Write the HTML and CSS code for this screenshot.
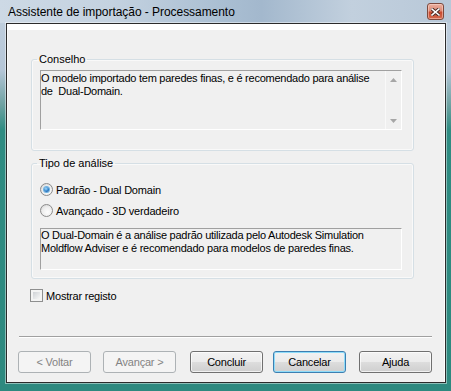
FILE: index.html
```html
<!DOCTYPE html>
<html lang="pt">
<head>
<meta charset="UTF-8" />
<title>Assistente de importação - Processamento</title>
<link rel="stylesheet" href="styles.css">
</head>
<body>
  <div class="window">
    <div class="titlebar">
      <span class="title">Assistente de importação - Processamento</span>
      <span class="close" aria-label="Fechar">
        <svg width="9" height="8" viewBox="0 0 9 8">
          <path d="M1 1 L8 7 M8 1 L1 7" stroke="#4a2a22" stroke-width="3.4" stroke-linecap="square"/>
          <path d="M1 1 L8 7 M8 1 L1 7" stroke="#ffffff" stroke-width="1.6" stroke-linecap="square"/>
        </svg>
      </span>
    </div>

    <div class="client">
      <div class="header"></div>
      <div class="content">
        <fieldset class="group advice">
          <legend>Conselho</legend>
          <div class="textbox memo">
            <div class="memo-text">O modelo importado tem paredes finas, e é recomendado para análise<br>de&nbsp; Dual-Domain.</div>
            <div class="vscroll">
              <span class="arrow">
                <svg width="7" height="4" viewBox="0 0 7 4"><path d="M3.5 0 L7 4 H0 Z" fill="#a6a6a6"/></svg>
              </span>
              <span class="arrow">
                <svg width="7" height="4" viewBox="0 0 7 4"><path d="M0 0 H7 L3.5 4 Z" fill="#a6a6a6"/></svg>
              </span>
            </div>
          </div>
        </fieldset>

        <fieldset class="group analysis">
          <legend>Tipo de análise</legend>
          <label class="option first"><span class="radio"><span class="dot"></span></span>Padrão - Dual Domain</label>
          <label class="option"><span class="radio"></span>Avançado - 3D verdadeiro</label>
          <div class="textbox desc">O Dual-Domain é a análise padrão utilizada pelo Autodesk Simulation<br>Moldflow Adviser e é recomendado para modelos de paredes finas.</div>
        </fieldset>

        <label class="check"><span class="box"></span>Mostrar registo</label>
      </div>

      <div class="separator"></div>

      <div class="buttons">
        <button type="button" class="btn back" disabled>&lt; Voltar</button>
        <button type="button" class="btn next" disabled>Avançar &gt;</button>
        <button type="button" class="btn finish">Concluir</button>
        <button type="button" class="btn cancel default">Cancelar</button>
        <button type="button" class="btn help">Ajuda</button>
      </div>
    </div>
  </div>
</body>
</html>
```

FILE: styles.css
```css
:root {
  --face: #f0f0f0;
  --shadow: #a0a0a0;
  --group-border: #d5dfe5;
  --ui-font: "Liberation Sans", Arial, sans-serif;
}

* {
  box-sizing: border-box;
}

body {
  margin: 0;
  background: #2f8c82;
  font-family: var(--ui-font);
  font-size: 11px;
  color: #000;
}

.window {
  width: 451px;
  height: 391px;
  background: linear-gradient(to bottom, #c3d1df 0, #b5c6d7 70px, #6ea2a2 105px, #2f8c82 130px, #2d897f 100%);
  display: flex;
  flex-direction: column;
}

.titlebar {
  height: 23px;
  display: flex;
  align-items: center;
  padding: 0 7px 0 8px;
  background: linear-gradient(to right, #cdd9e5 0, #c4d2e0 25%, #a9bed2 50%, #a3b8cd 58%, #c2d0de 78%, #b8c8d8 100%);
}

.title {
  flex: 1;
  font-size: 12px;
  letter-spacing: -0.05px;
  color: #000;
}

.close {
  width: 17px;
  height: 17px;
  border: 1px solid #7d4a3e;
  border-radius: 3px;
  background: linear-gradient(#eab0a0 0, #dd8a76 45%, #c8492f 55%, #d36a4e 100%);
  box-shadow: inset 0 0 0 1px rgba(255, 220, 210, 0.5);
  display: flex;
  align-items: center;
  justify-content: center;
}

.client {
  margin: 0 5px 0 6px;
  height: 360px;
  border: 1px solid #2b2b2b;
  background: var(--face);
  box-shadow: 0 0 0 1px rgba(255, 255, 255, 0.45), inset 1px 0 #fafafa, inset -1px 0 #ffffff;
  display: flex;
  flex-direction: column;
}

.header {
  height: 6px;
  background: #ffffff;
}

.content {
  padding: 23px 31px 0 24px;
}

.group {
  margin: 0;
  min-width: 0;
  border: 1px solid var(--group-border);
  border-radius: 3px;
  box-shadow: inset 0 0 0 1px rgba(255, 255, 255, 0.6);
}

.group legend {
  margin-left: -3px;
  padding: 0 2px;
  line-height: 13px;
}

.advice {
  padding: 4px 11px 20px 8px;
}

.analysis {
  margin-top: 6px;
  padding: 0 11px 8px 8px;
}

.textbox {
  border: 1px solid;
  border-color: var(--shadow) #ffffff #ffffff var(--shadow);
  background: var(--face);
  line-height: 13px;
  letter-spacing: -0.25px;
}

.memo {
  height: 60px;
  display: flex;
}

.memo-text {
  flex: 1;
  padding: 1px 0 0 0;
}

.vscroll {
  width: 16px;
  border-left: 1px solid #f9f9f9;
  display: flex;
  flex-direction: column;
  justify-content: space-between;
}

.arrow {
  height: 17px;
  display: flex;
  align-items: center;
  justify-content: center;
}

.desc {
  height: 42px;
  margin-top: 11px;
  padding: 0;
}

.option {
  display: flex;
  align-items: center;
  gap: 3px;
  height: 13px;
  margin-top: 8px;
  letter-spacing: -0.2px;
}

.option.first {
  margin-top: 13px;
}

.radio {
  width: 13px;
  height: 13px;
  border-radius: 50%;
  border: 1px solid #8b8b8b;
  background: radial-gradient(circle at 60% 65%, #fdfdfd 0, #ececec 55%, #c9c9c9 100%);
  display: flex;
  align-items: center;
  justify-content: center;
}

.dot {
  width: 5px;
  height: 5px;
  border-radius: 50%;
  background: radial-gradient(circle at 40% 35%, #a6dcfb 0, #2c7fca 55%, #0f3f85 100%);
  box-shadow: 0 0 0 1px #6eb3e2;
}

.check {
  display: flex;
  align-items: center;
  gap: 3px;
  height: 13px;
  margin: 10px 0 0 -1px;
  letter-spacing: -0.2px;
}

.box {
  width: 13px;
  height: 13px;
  border: 1px solid #8e8f8f;
  padding: 2px;
  background: linear-gradient(135deg, #cfd2d6, #f7f7f7) content-box, #f4f4f4;
}

.separator {
  margin: 34px 0 0 12px;
  width: 413px;
  border-top: 1px solid var(--shadow);
  border-bottom: 1px solid #ffffff;
}

.buttons {
  display: flex;
  margin: 13px 0 0 11px;
}

.btn {
  width: 73px;
  height: 22px;
  padding: 0;
  border: 1px solid #707070;
  border-radius: 3px;
  background: linear-gradient(#f2f2f2 0, #ebebeb 50%, #dddddd 50%, #cfcfcf 100%);
  box-shadow: inset 0 0 0 1px rgba(255, 255, 255, 0.7);
  font-family: var(--ui-font);
  font-size: 11px;
  letter-spacing: -0.2px;
  color: #000;
}

.btn:disabled {
  border-color: #adb2b5;
  background: #f4f4f4;
  box-shadow: none;
  color: #838383;
}

.btn.next {
  margin-left: 12px;
}

.btn.finish {
  margin-left: 14px;
}

.btn.cancel {
  margin-left: 10px;
}

.btn.help {
  margin-left: 13px;
}

.btn.default {
  border-color: #3c7fb1;
  box-shadow: inset 0 0 0 1px #8fdcf9;
}
```
